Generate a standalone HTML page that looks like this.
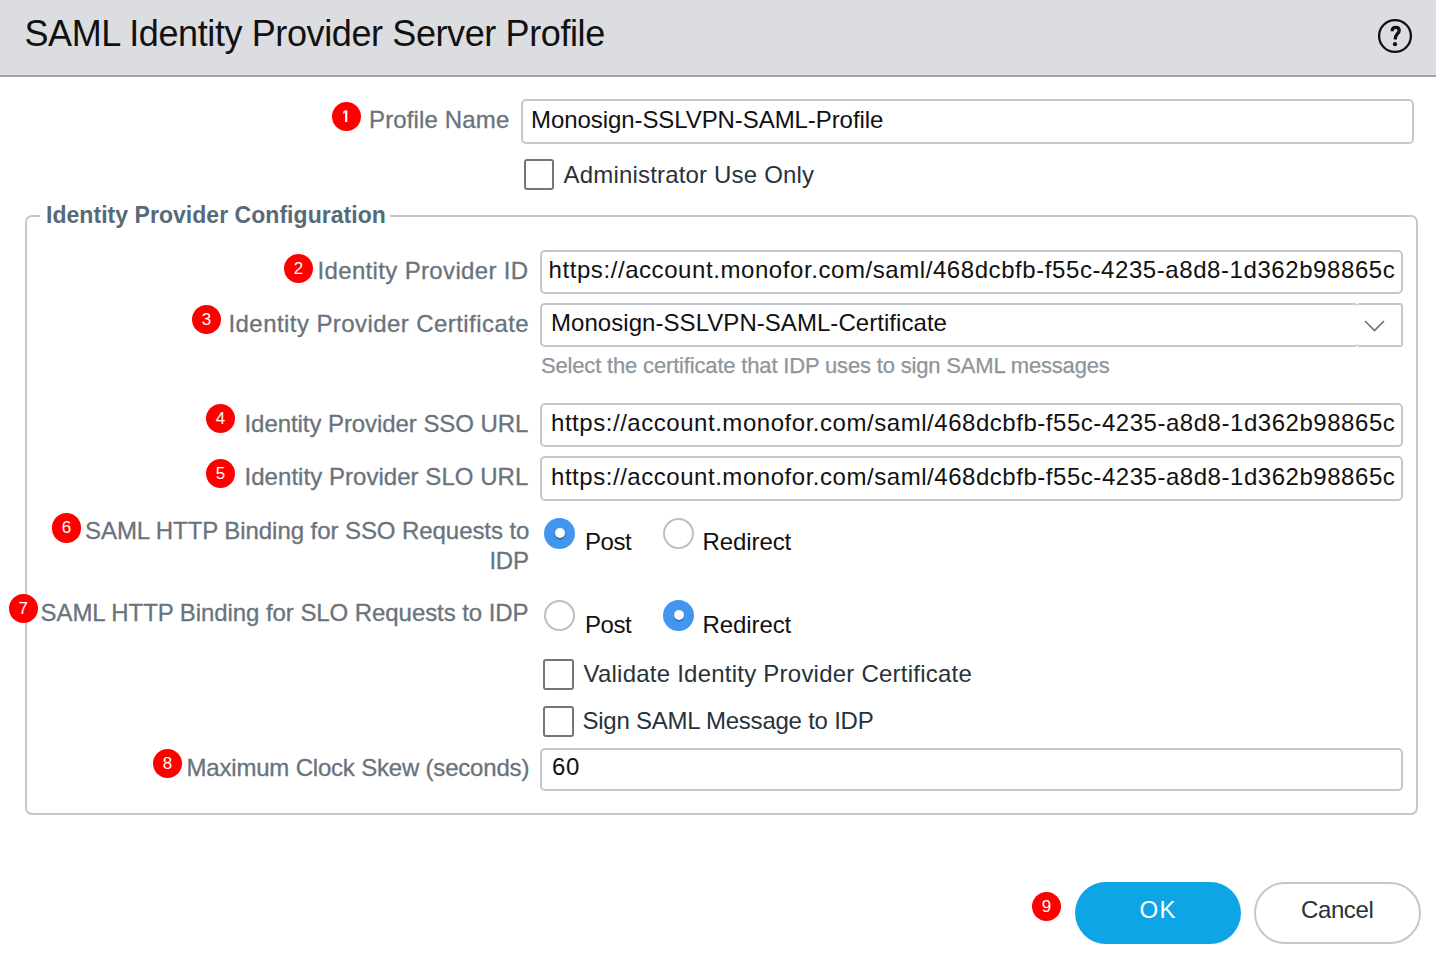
<!DOCTYPE html>
<html><head><meta charset="utf-8"><style>
html,body{margin:0;padding:0;width:1436px;height:970px;overflow:hidden;background:#fff;position:relative}
body{font-family:"Liberation Sans",sans-serif}
.t{position:absolute;white-space:nowrap}
.inp{position:absolute;box-sizing:border-box;border:2px solid #c4c8cc;border-radius:5px;background:#fff}
.cb{position:absolute;box-sizing:border-box;border:2.5px solid #6f777e;border-radius:3px;background:#fff}
.b{position:absolute;border-radius:50%;background:#ff0000;color:#fff;font-size:17px;text-align:center;font-family:"Liberation Sans",sans-serif}
</style></head><body>
<div style="position:absolute;left:0;top:0;width:1436px;height:75px;background:#dcdde0;border-bottom:2px solid #9ea3a8"></div>
<svg style="position:absolute;left:1375px;top:16px" width="40" height="40" viewBox="0 0 40 40">
<circle cx="20" cy="20" r="15.9" fill="none" stroke="#111" stroke-width="2.3"/>
<path d="M17.2 15.2 L17.2 14.4 C17.2 12.2 18.8 11.3 20.8 11.3 C23 11.3 24.2 12.7 24.2 14.5 C24.2 16.5 22.9 17.3 21.9 18.3 C20.9 19.3 20.3 20.2 20.3 23.4" fill="none" stroke="#111" stroke-width="3.3" stroke-linecap="butt"/>
<circle cx="20" cy="28.2" r="2.1" fill="#111"/>
</svg>
<div class="inp" style="left:521px;top:99px;width:893px;height:45px;"></div>
<div class="cb" style="left:523.5px;top:159px;width:30.5px;height:31px;"></div>
<div style="position:absolute;left:25px;top:215px;width:1389px;height:596px;border:2px solid #c4c8cc;border-radius:7px"></div>
<div style="position:absolute;left:40px;top:205px;width:350px;height:20px;background:#fff"></div>
<div class="inp" style="left:540px;top:249.5px;width:863px;height:44.0px;"></div>
<div class="inp" style="left:540px;top:303px;width:818px;height:44px;border-right:none;border-radius:5px 4px 4px 5px"></div>
<div class="inp" style="left:1358px;top:303px;width:45px;height:44px;border-left:none;border-radius:0 3px 3px 0;background:transparent"></div>
<svg style="position:absolute;left:1362px;top:317px" width="25" height="17" viewBox="0 0 25 17"><path d="M3 4 L12.5 13.5 L22 4" fill="none" stroke="#6a7075" stroke-width="1.6"/></svg>
<div class="inp" style="left:540px;top:403px;width:863px;height:44px;"></div>
<div class="inp" style="left:540px;top:456px;width:863px;height:44.5px;"></div>
<div style="position:absolute;left:544.4px;top:518.3px;width:31px;height:31px;border-radius:50%;background:#4296ef"></div><div style="position:absolute;left:554.9px;top:527.8px;width:10px;height:10px;border-radius:50%;background:#fff;box-shadow:0 1.5px 1px rgba(0,40,90,0.45)"></div>
<div style="position:absolute;left:663.1px;top:518.0px;width:31px;height:31px;border-radius:50%;box-sizing:border-box;border:2px solid #bfbfbf"></div>
<div style="position:absolute;left:544.4px;top:600.1px;width:31px;height:31px;border-radius:50%;box-sizing:border-box;border:2px solid #bfbfbf"></div>
<div style="position:absolute;left:663.1px;top:600.1px;width:31px;height:31px;border-radius:50%;background:#4296ef"></div><div style="position:absolute;left:673.6px;top:609.6px;width:10px;height:10px;border-radius:50%;background:#fff;box-shadow:0 1.5px 1px rgba(0,40,90,0.45)"></div>
<div class="cb" style="left:542.5px;top:658.5px;width:31.0px;height:31.0px;"></div>
<div class="cb" style="left:542.5px;top:706px;width:31.0px;height:31px;"></div>
<div class="inp" style="left:540px;top:748px;width:863px;height:42.5px;"></div>
<div style="position:absolute;left:1075px;top:882px;width:166px;height:61.5px;border-radius:31px;background:#0ea5e6"></div>
<div style="position:absolute;left:1253.5px;top:882px;width:167px;height:62px;border-radius:31px;box-sizing:border-box;border:2px solid #c4c8cc"></div>
<div class="b" style="left:331.8px;top:101.8px;width:29.5px;height:29.5px"><svg style="position:absolute;left:0;top:0" width="29.5" height="29.5" viewBox="0 0 29.5 29.5"><path d="M11.2 9.6 L13.4 8.3 L15.3 8.3 L15.3 20 L13.1 20 L13.1 10.9 C12.6 11.3 11.8 11.6 11.2 11.7 Z" fill="#fff"/></svg></div>
<div class="b" style="left:283.8px;top:253.6px;width:29.5px;height:29.5px;line-height:29.5px">2</div>
<div class="b" style="left:191.8px;top:304.6px;width:29.5px;height:29.5px;line-height:29.5px">3</div>
<div class="b" style="left:205.8px;top:403.8px;width:29.5px;height:29.5px;line-height:29.5px">4</div>
<div class="b" style="left:205.8px;top:458.9px;width:29.5px;height:29.5px;line-height:29.5px">5</div>
<div class="b" style="left:51.8px;top:513.0px;width:29.5px;height:29.5px;line-height:29.5px">6</div>
<div class="b" style="left:8.6px;top:593.9px;width:29.5px;height:29.5px;line-height:29.5px">7</div>
<div class="b" style="left:152.8px;top:748.8px;width:29.5px;height:29.5px;line-height:29.5px">8</div>
<div class="b" style="left:1031.8px;top:891.6px;width:29.5px;height:29.5px;line-height:29.5px">9</div>
<div class="t" style="left:24.5px;top:16.0px;font-size:36px;line-height:36px;letter-spacing:-0.394px;color:#111;">SAML Identity Provider Server Profile</div>
<div class="t" style="left:369.0px;top:107.7px;font-size:24px;line-height:24px;letter-spacing:0.145px;color:#69737c;-webkit-text-stroke:0.3px #69737c;">Profile Name</div>
<div class="t" style="left:531.0px;top:108.0px;font-size:24px;line-height:24px;letter-spacing:-0.074px;color:#111111;">Monosign-SSLVPN-SAML-Profile</div>
<div class="t" style="left:563.5px;top:162.9px;font-size:24px;line-height:24px;letter-spacing:0.181px;color:#28323a;">Administrator Use Only</div>
<div class="t" style="left:46.0px;top:203.9px;font-size:23px;line-height:23px;letter-spacing:0.040px;color:#566a7a;font-weight:700;">Identity Provider Configuration</div>
<div class="t" style="left:317.5px;top:259.1px;font-size:24px;line-height:24px;letter-spacing:0.347px;color:#69737c;-webkit-text-stroke:0.3px #69737c;">Identity Provider ID</div>
<div class="t" style="left:548.5px;top:258.0px;font-size:24px;line-height:24px;letter-spacing:0.574px;color:#111111;">https://account.monofor.com/saml/468dcbfb-f55c-4235-a8d8-1d362b98865c</div>
<div class="t" style="left:228.5px;top:311.8px;font-size:24px;line-height:24px;letter-spacing:0.429px;color:#69737c;-webkit-text-stroke:0.3px #69737c;">Identity Provider Certificate</div>
<div class="t" style="left:551.0px;top:311.0px;font-size:24px;line-height:24px;letter-spacing:0.052px;color:#111111;">Monosign-SSLVPN-SAML-Certificate</div>
<div class="t" style="left:541.0px;top:355.0px;font-size:22px;line-height:22px;letter-spacing:-0.168px;color:#8d959b;-webkit-text-stroke:0.25px #8d959b;">Select the certificate that IDP uses to sign SAML messages</div>
<div class="t" style="left:244.5px;top:411.8px;font-size:24px;line-height:24px;letter-spacing:-0.067px;color:#69737c;-webkit-text-stroke:0.3px #69737c;">Identity Provider SSO URL</div>
<div class="t" style="left:551.0px;top:411.0px;font-size:24px;line-height:24px;letter-spacing:0.538px;color:#111111;">https://account.monofor.com/saml/468dcbfb-f55c-4235-a8d8-1d362b98865c</div>
<div class="t" style="left:244.5px;top:465.1px;font-size:24px;line-height:24px;letter-spacing:0.042px;color:#69737c;-webkit-text-stroke:0.3px #69737c;">Identity Provider SLO URL</div>
<div class="t" style="left:551.0px;top:464.8px;font-size:24px;line-height:24px;letter-spacing:0.538px;color:#111111;">https://account.monofor.com/saml/468dcbfb-f55c-4235-a8d8-1d362b98865c</div>
<div class="t" style="left:85.0px;top:519.1px;font-size:24px;line-height:24px;letter-spacing:-0.067px;color:#69737c;-webkit-text-stroke:0.3px #69737c;">SAML HTTP Binding for SSO Requests to</div>
<div class="t" style="left:489.5px;top:548.9px;font-size:24px;line-height:24px;letter-spacing:-0.300px;color:#69737c;-webkit-text-stroke:0.3px #69737c;">IDP</div>
<div class="t" style="left:585.0px;top:529.7px;font-size:24px;line-height:24px;letter-spacing:-0.467px;color:#111111;">Post</div>
<div class="t" style="left:702.5px;top:529.7px;font-size:24px;line-height:24px;letter-spacing:-0.086px;color:#111111;">Redirect</div>
<div class="t" style="left:40.5px;top:601.0px;font-size:24px;line-height:24px;letter-spacing:-0.070px;color:#69737c;-webkit-text-stroke:0.3px #69737c;">SAML HTTP Binding for SLO Requests to IDP</div>
<div class="t" style="left:585.0px;top:613.0px;font-size:24px;line-height:24px;letter-spacing:-0.467px;color:#111111;">Post</div>
<div class="t" style="left:702.5px;top:613.0px;font-size:24px;line-height:24px;letter-spacing:-0.086px;color:#111111;">Redirect</div>
<div class="t" style="left:583.5px;top:662.1px;font-size:24px;line-height:24px;letter-spacing:0.232px;color:#28323a;">Validate Identity Provider Certificate</div>
<div class="t" style="left:582.5px;top:709.2px;font-size:24px;line-height:24px;letter-spacing:-0.235px;color:#28323a;">Sign SAML Message to IDP</div>
<div class="t" style="left:186.5px;top:755.7px;font-size:24px;line-height:24px;letter-spacing:-0.193px;color:#69737c;-webkit-text-stroke:0.3px #69737c;">Maximum Clock Skew (seconds)</div>
<div class="t" style="left:552.0px;top:754.5px;font-size:24px;line-height:24px;letter-spacing:0.600px;color:#111111;">60</div>
<div class="t" style="left:1139.5px;top:898.1px;font-size:24px;line-height:24px;letter-spacing:1.400px;color:#ffffff;">OK</div>
<div class="t" style="left:1301.0px;top:898.0px;font-size:24px;line-height:24px;letter-spacing:-0.400px;color:#28323a;">Cancel</div>
</body></html>
